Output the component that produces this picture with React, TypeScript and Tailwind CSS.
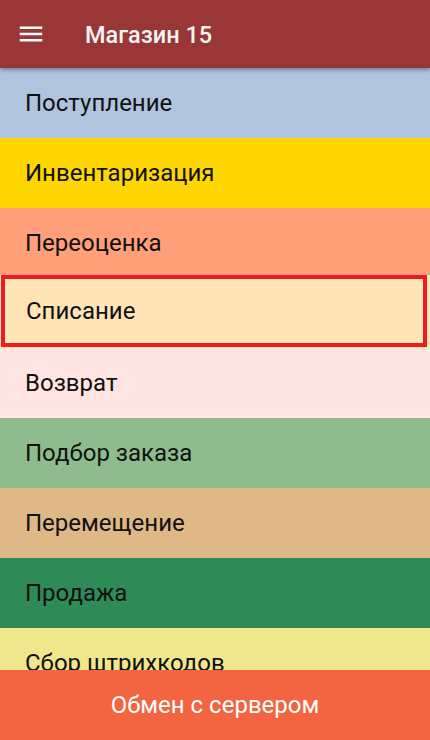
import React from 'react';

const items = [
  { label: 'Поступление', bg: 'bg-[#b0c4de]' },
  { label: 'Инвентаризация', bg: 'bg-[#ffd700]' },
  { label: 'Переоценка', bg: 'bg-[#ffa07a]' },
  { label: 'Списание', bg: 'bg-[#ffe4b5]', selected: true },
  { label: 'Возврат', bg: 'bg-[#ffe4e1]' },
  { label: 'Подбор заказа', bg: 'bg-[#8fbc8f]' },
  { label: 'Перемещение', bg: 'bg-[#deb887]' },
  { label: 'Продажа', bg: 'bg-[#2e8b57]' },
  { label: 'Сбор штрихкодов', bg: 'bg-[#f0e68c]' },
];

const App: React.FC = () => {
  return (
    <div className="flex flex-col h-[740px] w-full bg-white font-['Roboto',sans-serif] overflow-hidden">
      {/* toolbar */}
      <div className="relative z-10 flex items-center h-[68px] shrink-0 bg-[#993737] pl-4 text-white shadow-[0_2px_4px_rgba(0,0,0,0.35)]">
        <svg width="30" height="30" viewBox="0 0 24 24" fill="currentColor">
          <path d="M3 18h18v-2H3v2zm0-5h18v-2H3v2zm0-7v2h18V6H3z" />
        </svg>
        <span className="ml-[39px] mt-[3px] text-[23.5px] font-medium text-[#f4f4f4]">Магазин 15</span>
      </div>

      {/* operations list */}
      <div className="flex-1 overflow-hidden flex flex-col">
        {items.map((it) => (
          <div key={it.label} className={`shrink-0 h-[70px] ${it.bg} ${it.selected ? 'p-[0_3px_1px_1px] -mt-[3px] h-[73px]' : ''}`}>
            <div
              className={`flex items-center h-full text-[24px] text-[#111] ${
                it.selected ? 'border-4 border-[#ed1c24] pl-[21px]' : 'pl-[25px]'
              }`}
            >
              {it.label}
            </div>
          </div>
        ))}
      </div>

      <button className="shrink-0 h-[70px] w-full bg-[#f36441] text-white text-[24px] flex items-center justify-center">
        Обмен с сервером
      </button>
    </div>
  );
};

export default App;
